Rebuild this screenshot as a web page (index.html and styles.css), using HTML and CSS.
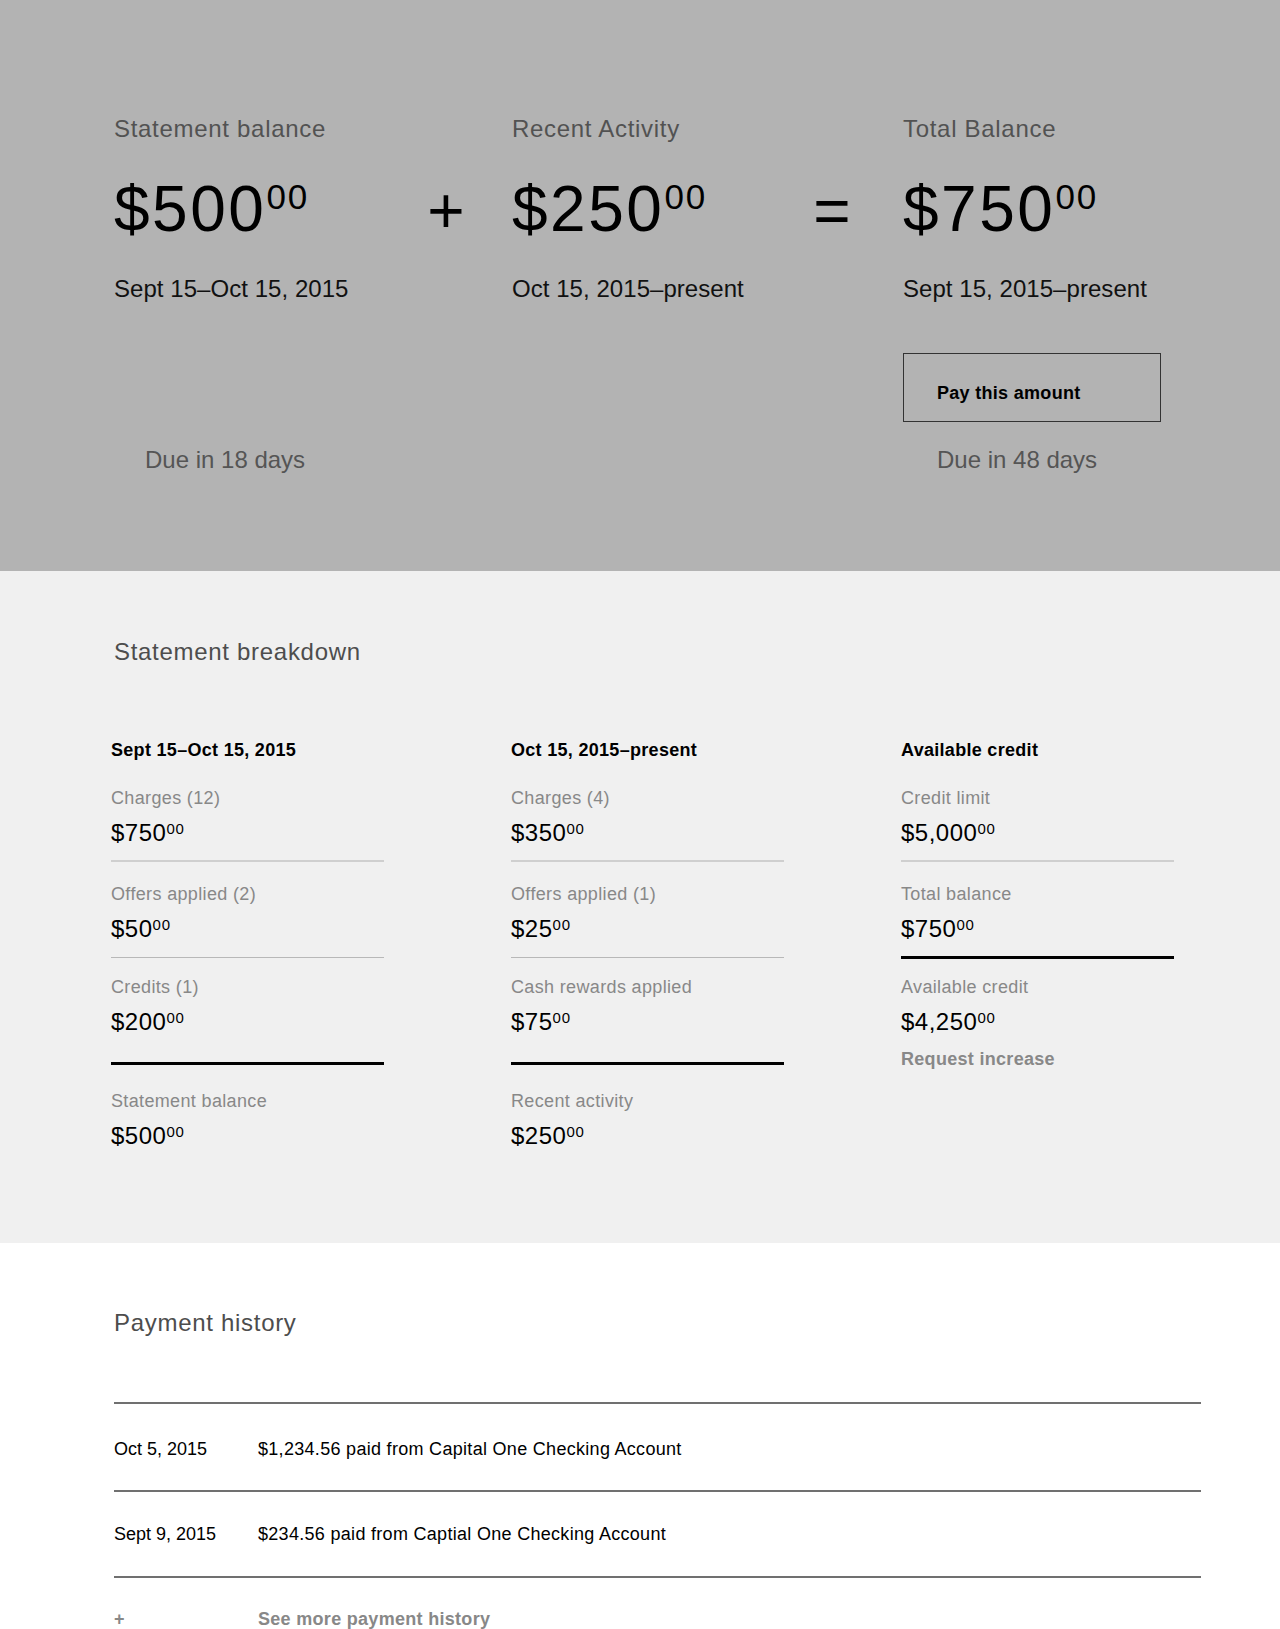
FILE: index.html
```html
<!DOCTYPE html>
<html lang="en">
<head>
<meta charset="utf-8">
<title>Statement</title>
<link rel="stylesheet" href="styles.css">
</head>
<body>
<section class="summary">
  <div class="summary-grid">
    <div class="sum-col">
      <div class="sum-label">Statement balance</div>
      <div class="sum-amount">$500<span class="cents">00</span></div>
      <div class="sum-date">Sept 15–Oct 15, 2015</div>
      <div class="sum-due">Due in 18 days</div>
    </div>
    <div class="op">+</div>
    <div class="sum-col">
      <div class="sum-label">Recent Activity</div>
      <div class="sum-amount">$250<span class="cents">00</span></div>
      <div class="sum-date">Oct 15, 2015–present</div>
    </div>
    <div class="op">=</div>
    <div class="sum-col">
      <div class="sum-label">Total Balance</div>
      <div class="sum-amount">$750<span class="cents">00</span></div>
      <div class="sum-date">Sept 15, 2015–present</div>
      <button class="pay-btn" type="button">Pay this amount</button>
      <div class="sum-due sum-due-after">Due in 48 days</div>
    </div>
  </div>
</section>

<section class="breakdown">
  <h2 class="section-title">Statement breakdown</h2>
  <div class="bd-grid">
    <div class="bd-col">
      <div class="bd-head">Sept 15–Oct 15, 2015</div>
      <div class="bd-row r1">
        <div class="bd-label">Charges (12)</div>
        <div class="bd-amount">$750<span class="cents-sm">00</span></div>
      </div>
      <div class="bd-row r2">
        <div class="bd-label">Offers applied (2)</div>
        <div class="bd-amount">$50<span class="cents-sm">00</span></div>
      </div>
      <div class="bd-row r3">
        <div class="bd-label">Credits (1)</div>
        <div class="bd-amount">$200<span class="cents-sm">00</span></div>
      </div>
      <div class="bd-row r4">
        <div class="bd-label">Statement balance</div>
        <div class="bd-amount">$500<span class="cents-sm">00</span></div>
      </div>
    </div>
    <div class="bd-col">
      <div class="bd-head">Oct 15, 2015–present</div>
      <div class="bd-row r1">
        <div class="bd-label">Charges (4)</div>
        <div class="bd-amount">$350<span class="cents-sm">00</span></div>
      </div>
      <div class="bd-row r2">
        <div class="bd-label">Offers applied (1)</div>
        <div class="bd-amount">$25<span class="cents-sm">00</span></div>
      </div>
      <div class="bd-row r3">
        <div class="bd-label">Cash rewards applied</div>
        <div class="bd-amount">$75<span class="cents-sm">00</span></div>
      </div>
      <div class="bd-row r4">
        <div class="bd-label">Recent activity</div>
        <div class="bd-amount">$250<span class="cents-sm">00</span></div>
      </div>
    </div>
    <div class="bd-col">
      <div class="bd-head">Available credit</div>
      <div class="bd-row r1">
        <div class="bd-label">Credit limit</div>
        <div class="bd-amount">$5,000<span class="cents-sm">00</span></div>
      </div>
      <div class="bd-row r2 r2-total">
        <div class="bd-label">Total balance</div>
        <div class="bd-amount">$750<span class="cents-sm">00</span></div>
      </div>
      <div class="bd-row r3-last">
        <div class="bd-label">Available credit</div>
        <div class="bd-amount">$4,250<span class="cents-sm">00</span></div>
        <a class="link-muted request" href="#">Request increase</a>
      </div>
    </div>
  </div>
</section>

<section class="history">
  <h2 class="section-title">Payment history</h2>
  <div class="pay-list">
    <div class="pay-row">
      <div class="pay-date">Oct 5, 2015</div>
      <div class="pay-desc">$1,234.56 paid from Capital One Checking Account</div>
    </div>
    <div class="pay-row">
      <div class="pay-date">Sept 9, 2015</div>
      <div class="pay-desc">$234.56 paid from Captial One Checking Account</div>
    </div>
    <div class="pay-more">
      <div class="pay-date plus">+</div>
      <a class="link-muted" href="#">See more payment history</a>
    </div>
  </div>
</section>
</body>
</html>
```

FILE: styles.css
```css
* { box-sizing: border-box; }

body {
  margin: 0;
  font-family: "Liberation Sans", Arial, sans-serif;
  color: #000;
  background: #fff;
}

/* ---------- summary ---------- */
.summary {
  background: #b3b3b3;
  padding: 114px 0 97px 114px;
}

.summary-grid {
  display: grid;
  grid-template-columns: 266px 132px 249px 142px 300px;
}

.sum-col {
  display: flex;
  flex-direction: column;
  align-items: flex-start;
}

.sum-label {
  font-size: 24px;
  line-height: 29px;
  letter-spacing: 0.7px;
  color: #525252;
}

.sum-amount {
  margin-top: 34px;
  font-size: 64px;
  line-height: 64px;
  letter-spacing: 2.5px;
  color: #000;
  white-space: nowrap;
}

.cents {
  display: inline-block;
  vertical-align: top;
  font-size: 35px;
  line-height: 35px;
  letter-spacing: 2px;
  margin-top: 2px;
}

.sum-date {
  margin-top: 33px;
  font-size: 24px;
  line-height: 29px;
  letter-spacing: 0.05px;
  color: #111;
  white-space: nowrap;
}

.sum-due {
  margin-top: auto;
  padding-left: 31px;
  font-size: 24px;
  line-height: 29px;
  color: #555;
}

.sum-due-after {
  margin-top: 23px;
  padding-left: 34px;
}

.op {
  padding-top: 65px;
  text-align: center;
  font-size: 64px;
  line-height: 64px;
  color: #000;
}

.pay-btn {
  display: block;
  margin-top: 50px;
  width: 258px;
  padding: 28px 33px 17px;
  text-align: left;
  font-family: inherit;
  font-weight: 700;
  font-size: 18px;
  line-height: 22px;
  letter-spacing: 0.3px;
  color: #000;
  background: transparent;
  border: 1px solid #333;
  border-radius: 0;
}

/* ---------- section titles ---------- */
.section-title {
  margin: 0;
  padding-left: 114px;
  font-weight: 400;
  font-size: 24px;
  line-height: 29px;
  letter-spacing: 0.7px;
  color: #4d4d4d;
}

/* ---------- breakdown ---------- */
.breakdown {
  background: #f0f0f0;
  padding: 66px 0 93px;
}

.bd-grid {
  margin-top: 73px;
  padding-left: 111px;
  display: grid;
  grid-template-columns: 400px 390px 273px;
  align-items: start;
}

.bd-col {
  width: 273px;
}

.bd-head {
  font-weight: 700;
  font-size: 18px;
  line-height: 22px;
  letter-spacing: 0.3px;
  color: #000;
}

.bd-label {
  font-size: 18px;
  line-height: 22px;
  letter-spacing: 0.35px;
  color: #888;
}

.bd-amount {
  margin-top: 9px;
  font-size: 24px;
  line-height: 29px;
  letter-spacing: 0.5px;
  color: #000;
  white-space: nowrap;
}

.cents-sm {
  display: inline-block;
  vertical-align: top;
  font-size: 15px;
  line-height: 15px;
  letter-spacing: 0.8px;
  margin-top: 3px;
}

.bd-row.r1 {
  margin-top: 26px;
  padding-bottom: 13px;
  border-bottom: 2px solid #cfcfcf;
}

.bd-row.r2 {
  padding-top: 21px;
  padding-bottom: 14px;
  border-bottom: 1px solid #b8b8b8;
}

.bd-row.r2-total {
  padding-bottom: 13px;
  border-bottom: 3px solid #000;
}

.bd-row.r3 {
  padding-top: 18px;
  padding-bottom: 26px;
  border-bottom: 3px solid #000;
}

.bd-row.r3-last {
  padding-top: 17px;
}

.bd-row.r4 {
  padding-top: 25px;
}

.link-muted {
  font-weight: 700;
  font-size: 18px;
  line-height: 22px;
  letter-spacing: 0.3px;
  color: #888;
  text-decoration: none;
}

.request {
  display: block;
  margin-top: 12px;
}

/* ---------- history ---------- */
.history {
  padding: 65px 0 40px;
}

.pay-list {
  margin: 65px 79px 0 114px;
  border-top: 2px solid #707070;
}

.pay-row,
.pay-more {
  display: flex;
  font-size: 18px;
  line-height: 22px;
}

.pay-row {
  padding: 31px 0 31px;
  border-bottom: 2px solid #707070;
}

.pay-row:first-child {
  padding-top: 34px;
  padding-bottom: 30px;
}

.pay-more {
  padding-top: 30px;
}

.pay-date {
  width: 144px;
  flex-shrink: 0;
  color: #000;
}

.pay-date.plus {
  color: #888;
  font-weight: 700;
}

.pay-desc {
  letter-spacing: 0.3px;
  color: #000;
}
```
